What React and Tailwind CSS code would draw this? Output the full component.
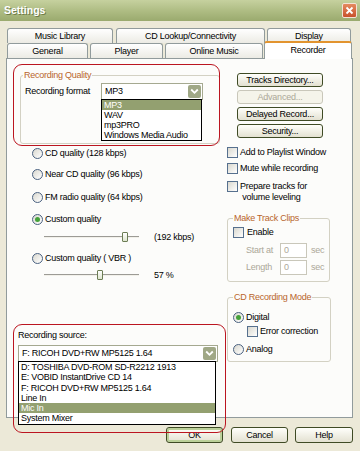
import React from "react";

const Chevron = () => (
  <svg width="9" height="7" viewBox="0 0 9 7">
    <path d="M1.2 1.5 L4.5 4.8 L7.8 1.5" fill="none" stroke="#ffffff" strokeWidth="1.8" />
  </svg>
);

function Radio({ checked }) {
  return (
    <span className="flex h-[11px] w-[11px] shrink-0 items-center justify-center rounded-full border border-[#4a6180] bg-gradient-to-br from-[#d9d8cf] to-white">
      {checked && <span className="h-[5px] w-[5px] rounded-full bg-[#45a23a]" />}
    </span>
  );
}

function Check() {
  return <span className="h-[11px] w-[11px] shrink-0 border border-[#56708e] bg-gradient-to-br from-[#d9d8cf] to-white" />;
}

function XPButton({ children, className = "", disabled, primary }) {
  return (
    <div
      className={`flex items-center justify-center rounded-[3px] border ${
        disabled
          ? "border-[#c9c7ba] bg-[#f5f4ea] text-[#aca899]"
          : "border-[#3f4b25] bg-gradient-to-b from-[#fffffb] to-[#e3e1d1]"
      } ${primary ? "shadow-[inset_0_0_0_2px_#bcd19a]" : ""} ${className}`}
    >
      {children}
    </div>
  );
}

function Combo({ value, className = "", children }) {
  return (
    <div className={`relative flex h-[17px] items-center border border-[#a5a990] bg-white pl-[3px] ${className}`}>
      <span className="flex-1 truncate">{value}</span>
      <div className="mr-[1px] flex h-[13px] w-[13px] items-center justify-center rounded-[2px] bg-[#a0a886]">
        <Chevron />
      </div>
      {children}
    </div>
  );
}

function Tab({ label, className = "" }) {
  return (
    <div
      className={`flex h-[15px] items-center justify-center rounded-t-[3px] border border-b-0 border-[#919b9c] bg-gradient-to-b from-white to-[#ecebe4] ${className}`}
    >
      {label}
    </div>
  );
}

function Slider({ thumb, text }) {
  return (
    <div className="ml-[37px] flex h-[10px] items-center">
      <div className="relative h-[2px] w-[95px] border-t border-[#9c9b95] bg-[#f2f1ea]">
        <span className={`absolute -top-[5px] h-[10px] w-[6px] rounded-[1px] border border-[#6c7d55] bg-gradient-to-b from-white to-[#dfe6cf] ${thumb}`} />
      </div>
      <span className="ml-[15px]">{text}</span>
    </div>
  );
}

export default function App() {
  return (
    <div className="relative flex h-[451px] w-[360px] flex-col overflow-hidden bg-[#ece9d8] font-['Liberation_Sans',Arial,sans-serif] text-[9px] leading-[11px] tracking-[-0.25px] text-black">
      {/* title bar */}
      <div className="flex h-[21px] shrink-0 items-center bg-gradient-to-b from-[#c6d19f] via-[#afbd84] to-[#9aaa6e]">
        <span className="pl-[4px] text-[10.5px] font-bold tracking-normal text-white [text-shadow:1px_1px_0_#6f7d4a]">
          Settings
        </span>
        <div className="ml-auto mr-[3px] flex h-[15px] w-[15px] items-center justify-center rounded-[2px] border border-[#f3e2d6] bg-gradient-to-b from-[#e48a5f] to-[#c8502c]">
          <svg width="9" height="9" viewBox="0 0 9 9">
            <path d="M1.5 1.5 L7.5 7.5 M7.5 1.5 L1.5 7.5" stroke="#ffffff" strokeWidth="1.8" />
          </svg>
        </div>
      </div>

      <div className="flex flex-col px-[6px] pt-[7px]">
        {/* tabs */}
        <div className="flex h-[15px] pl-[1px]">
          <Tab label="Music Library" className="w-[106px]" />
          <Tab label="CD Lookup/Connectivity" className="ml-[3px] w-[149px]" />
          <Tab label="Display" className="ml-[2px] w-[84px]" />
        </div>
        <div className="flex h-[15px] items-end pl-[1px]">
          <Tab label="General" className="w-[81px]" />
          <Tab label="Player" className="ml-[2px] w-[73px]" />
          <Tab label="Online Music" className="ml-[2px] w-[98px]" />
          <div className="relative z-10 -mb-px ml-[1px] flex h-[18px] w-[88px] justify-center rounded-t-[3px] border-x border-t-2 border-[#919b9c] border-t-[#e2942f] bg-white pt-[2px]">
            Recorder
          </div>
        </div>

        {/* panel */}
        <div className="flex h-[360px] w-[347px] border border-[#919b9c] bg-[#fcfcfa]">
          {/* left column */}
          <div className="flex w-[218px] flex-col">
            <fieldset className="ml-[13px] mt-[11px] h-[74px] w-[200px] rounded-[3px] border border-[#d3d1c3] pl-[2px]">
              <legend className="px-[1px] text-[#b8652c]">Recording Quality</legend>
              <div className="mt-[2px] flex items-center">
                <span className="ml-[2px] w-[76px]">Recording format</span>
                <Combo value="MP3" className="w-[102px]">
                  <div className="absolute left-[-1px] top-full z-20 flex w-[101px] flex-col border border-black bg-white">
                    <span className="h-[10px] bg-[#93a070] pl-[2px] leading-[10px] text-white">MP3</span>
                    <span className="h-[10px] pl-[2px] leading-[10px]">WAV</span>
                    <span className="h-[10px] pl-[2px] leading-[10px]">mp3PRO</span>
                    <span className="h-[10px] pl-[2px] leading-[10px]">Windows Media Audio</span>
                  </div>
                </Combo>
              </div>
            </fieldset>

            <div className="ml-[25px] mt-[4px] flex h-[11px] items-center gap-[2px]">
              <Radio />
              <span>CD quality (128 kbps)</span>
            </div>
            <div className="ml-[25px] mt-[10px] flex h-[11px] items-center gap-[2px]">
              <Radio />
              <span>Near CD quality (96 kbps)</span>
            </div>
            <div className="ml-[25px] mt-[12px] flex h-[11px] items-center gap-[2px]">
              <Radio />
              <span>FM radio quality (64 kbps)</span>
            </div>
            <div className="ml-[25px] mt-[11px] flex h-[11px] items-center gap-[2px]">
              <Radio checked />
              <span>Custom quality</span>
            </div>
            <div className="mt-[7px]">
              <Slider thumb="left-[78px]" text="(192 kbps)" />
            </div>
            <div className="ml-[25px] mt-[11px] flex h-[11px] items-center gap-[2px]">
              <Radio />
              <span>Custom quality ( VBR )</span>
            </div>
            <div className="mt-[6px]">
              <Slider thumb="left-[53px]" text="57 %" />
            </div>

            <span className="ml-[11px] mt-[50px]">Recording source:</span>
            <Combo value="F: RICOH DVD+RW MP5125 1.64" className="ml-[11px] mt-[4px] w-[200px]">
              <div className="absolute left-[-1px] top-full z-20 flex w-[198px] flex-col border border-black bg-white">
                <span className="h-[10.3px] pl-[2px] leading-[10px]">D: TOSHIBA DVD-ROM SD-R2212 1913</span>
                <span className="h-[10.3px] pl-[2px] leading-[10px]">E: VOBID InstantDrive CD 14</span>
                <span className="h-[10.3px] pl-[2px] leading-[10px]">F: RICOH DVD+RW MP5125 1.64</span>
                <span className="h-[10.3px] pl-[2px] leading-[10px]">Line In</span>
                <span className="h-[10.3px] bg-[#93a070] pl-[2px] leading-[10px] text-white">Mic In</span>
                <span className="h-[10.3px] pl-[2px] leading-[10px]">System Mixer</span>
              </div>
            </Combo>
          </div>

          {/* right column */}
          <div className="flex flex-1 flex-col">
            <div className="ml-[12px] mt-[14px] flex w-[86px] flex-col gap-[3px]">
              <XPButton className="h-[14px]">Tracks Directory...</XPButton>
              <XPButton className="h-[14px]" disabled>Advanced...</XPButton>
              <XPButton className="h-[14px]">Delayed Record...</XPButton>
              <XPButton className="h-[14px]">Security...</XPButton>
            </div>

            <div className="ml-[2px] mt-[9px] flex h-[11px] items-center gap-[2px]">
              <Check />
              <span>Add to Playlist Window</span>
            </div>
            <div className="ml-[2px] mt-[5px] flex h-[11px] items-center gap-[2px]">
              <Check />
              <span>Mute while recording</span>
            </div>
            <div className="ml-[2px] mt-[7px] flex items-start gap-[2px]">
              <Check />
              <span>
                Prepare tracks for
                <br />
                &nbsp;volume leveling
              </span>
            </div>

            <fieldset className="ml-[2px] mt-[10px] h-[69px] w-[103px] rounded-[3px] border border-[#d3d1c3] pl-[5px]">
              <legend className="px-[1px] text-[#b8652c]">Make Track Clips</legend>
              <div className="mt-[3px] flex h-[11px] items-center gap-[3px]">
                <Check />
                <span>Enable</span>
              </div>
              <div className="mt-[5px] flex h-[15px] items-center text-[#aca899]">
                <span className="ml-[13px] w-[34px]">Start at</span>
                <span className="flex h-[15px] w-[27px] items-center border border-[#c9c7ba] bg-white pl-[3px]">0</span>
                <span className="ml-[4px]">sec</span>
              </div>
              <div className="mt-[2px] flex h-[15px] items-center text-[#aca899]">
                <span className="ml-[13px] w-[34px]">Length</span>
                <span className="flex h-[15px] w-[27px] items-center border border-[#c9c7ba] bg-white pl-[3px]">0</span>
                <span className="ml-[4px]">sec</span>
              </div>
            </fieldset>

            <fieldset className="ml-[2px] mt-[10px] h-[70px] w-[104px] rounded-[3px] border border-[#d3d1c3] pl-[5px]">
              <legend className="px-[1px] text-[#b8652c]">CD Recording Mode</legend>
              <div className="mt-[9px] flex h-[11px] items-center gap-[2px]">
                <Radio checked />
                <span>Digital</span>
              </div>
              <div className="ml-[14px] mt-[3px] flex h-[11px] items-center gap-[2px]">
                <Check />
                <span>Error correction</span>
              </div>
              <div className="mt-[7px] flex h-[11px] items-center gap-[2px]">
                <Radio />
                <span>Analog</span>
              </div>
            </fieldset>
          </div>
        </div>

        {/* dialog buttons */}
        <div className="mt-[9px] flex">
          <XPButton primary className="ml-[160px] h-[16px] w-[57px]">OK</XPButton>
          <XPButton className="ml-[8px] h-[16px] w-[57px]">Cancel</XPButton>
          <XPButton className="ml-[7px] h-[16px] w-[58px]">Help</XPButton>
        </div>
      </div>

      {/* red annotation frames */}
      <div className="pointer-events-none absolute left-[13px] top-[64px] z-30 h-[82px] w-[207px] rounded-[9px] border border-[#bb1520]" />
      <div className="pointer-events-none absolute left-[13px] top-[324px] z-30 h-[109px] w-[213px] rounded-[9px] border border-[#bb1520]" />
    </div>
  );
}
